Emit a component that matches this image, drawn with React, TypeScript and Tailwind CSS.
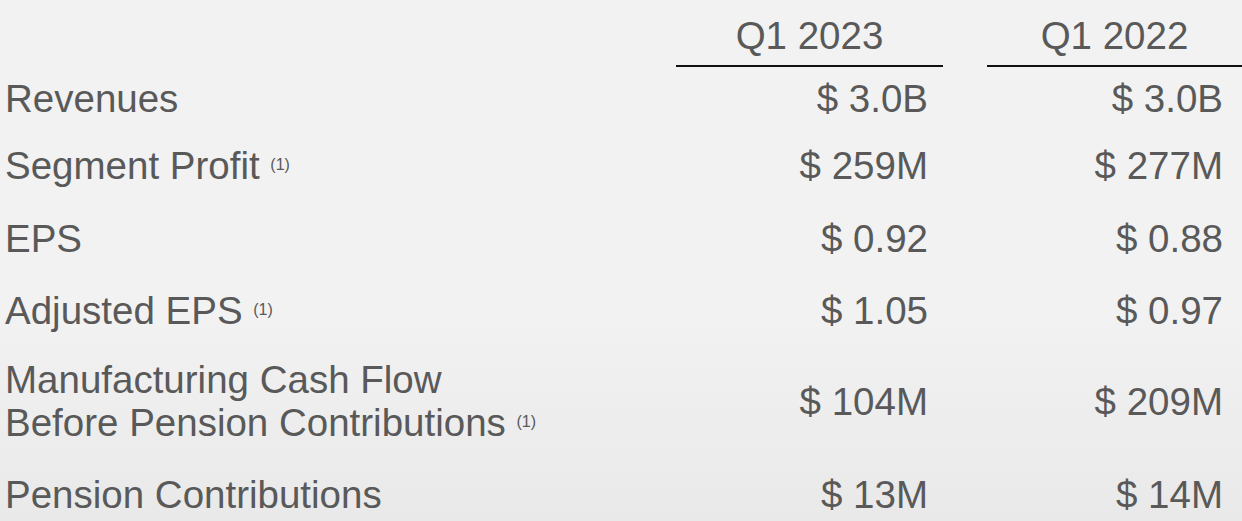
type Row = {
  label: string[];
  note?: boolean;
  q1_2023: string;
  q1_2022: string;
  mt: string;
};

const ROWS: Row[] = [
  { label: ["Revenues"], q1_2023: "$ 3.0B", q1_2022: "$ 3.0B", mt: "mt-[10px]" },
  { label: ["Segment Profit"], note: true, q1_2023: "$ 259M", q1_2022: "$ 277M", mt: "mt-[24px]" },
  { label: ["EPS"], q1_2023: "$ 0.92", q1_2022: "$ 0.88", mt: "mt-[30px]" },
  { label: ["Adjusted EPS"], note: true, q1_2023: "$ 1.05", q1_2022: "$ 0.97", mt: "mt-[29px]" },
  {
    label: ["Manufacturing Cash Flow", "Before Pension Contributions"],
    note: true,
    q1_2023: "$ 104M",
    q1_2022: "$ 209M",
    mt: "mt-[26px]",
  },
  { label: ["Pension Contributions"], q1_2023: "$ 13M", q1_2022: "$ 14M", mt: "mt-[29px]" },
];

function Note() {
  return <span className="text-[16px] leading-none align-[9px]">(1)</span>;
}

export default function App() {
  return (
    <div className="w-[1242px] h-[521px] overflow-hidden bg-linear-to-b from-[#f2f2f2] from-60% to-[#e9e9e9] font-['Liberation_Sans',Arial,sans-serif] text-[38.5px] leading-[43px] text-[#595959]">
      {/* ── Column headers ── */}
      <div className="flex pt-[14px]">
        <div className="w-[676px]" />
        <div className="w-[267px] pb-[8px] border-b-2 border-[#111] text-center">Q1 2023</div>
        <div className="w-[44px]" />
        <div className="w-[255px] pb-[8px] border-b-2 border-[#111] text-center">Q1 2022</div>
      </div>

      {/* ── Rows ── */}
      {ROWS.map((row) => (
        <div key={row.label.join(" ")} className={`flex items-center ${row.mt}`}>
          <div className="w-[676px] pl-[5px]">
            {row.label.map((line, i) => (
              <div key={line} className="whitespace-nowrap">
                {line}
                {row.note && i === row.label.length - 1 && (
                  <>
                    {" "}
                    <Note />
                  </>
                )}
              </div>
            ))}
          </div>
          <div className="w-[267px] pr-[15px] text-right whitespace-nowrap">{row.q1_2023}</div>
          <div className="w-[44px]" />
          <div className="w-[255px] pr-[19px] text-right whitespace-nowrap">{row.q1_2022}</div>
        </div>
      ))}
    </div>
  );
}
